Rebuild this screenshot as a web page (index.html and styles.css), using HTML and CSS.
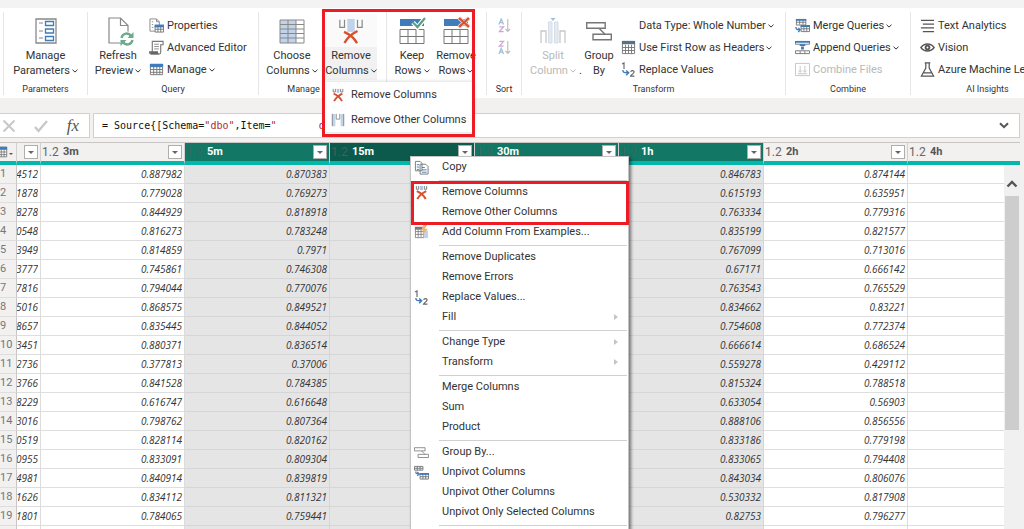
FILE: index.html
```html
<!DOCTYPE html>
<html lang="en">
<head>
  <meta charset="UTF-8" />
  <meta name="viewport" content="width=device-width, initial-scale=1.0" />
  <title>Power Query Editor</title>
  <link rel="stylesheet" href="styles.css">
</head>
<body>
  <!-- shared icons -->
  <svg class="defs" aria-hidden="true">
    <symbol id="i-chev" viewBox="0 0 6 4"><path d="M.5.7 3 3.1 5.5.7" fill="none" stroke="currentColor"/></symbol>
    <symbol id="i-table" viewBox="0 0 16 16">
      <path d="M1.5 2.5h13v11h-13zM1.5 8h13M1.5 11h13M5 5v8.500M8.300 5v8.500M11.500 5v8.500" fill="#fff" stroke="#777"/>
      <path d="M1 2h14v3.500H1z" fill="#3f7cb9"/>
    </symbol>
    <symbol id="i-remove" viewBox="0 0 26 28">
      <path d="M1 2v8h5V2M25 2v8h-5V2" fill="none" stroke="#888" stroke-width="1.300"/>
      <path d="M9 1h8v14H9z" fill="#c0d3ea"/>
      <path d="M5.500 15C10 17 16 21 19.500 27M20 14C14 17 9 21 6 27" fill="none" stroke="#d8512f" stroke-width="2.600"/>
    </symbol>
    <symbol id="i-remove-small" viewBox="0 0 16 16">
      <path d="M2.500 1v3.500H5V1M13.500 1v3.500H11V1" fill="none" stroke="#777"/>
      <path d="M6.500 1h3v4.500h-3z" fill="#a9c3e2"/>
      <path d="M3 6.500C6.500 8 10.500 11 12.500 15M13 6.500C9 8.500 5.500 11.500 3.500 15" fill="none" stroke="#d8512f" stroke-width="2.200"/>
    </symbol>
    <symbol id="i-replace" viewBox="0 0 16 16">
      <path d="M1.200 2.200 3.200 1v6.500M10.300 10.600c.3-2 3.800-1.800 3.600.2-.1 1.400-2.600 2.500-3.600 4.200h4" fill="none" stroke="#666" stroke-width="1.200"/>
      <path d="M2 8.500c0 3 1.500 3 5.500 3M5.500 9l2.700 2.500L5.500 14" fill="none" stroke="#3f7cb9" stroke-width="1.500"/>
    </symbol>
    <symbol id="i-group" viewBox="0 0 26 20">
      <path d="M.700 1.700h18.500v5.500H.700zM7 13.200h18.300v5.500H7zM13 7.200l6 6" fill="#fff" stroke="#777" stroke-width="1.400"/>
    </symbol>
  </svg>

  <header class="ribbon">
    <section class="group">
      <div class="tools center">
        <button class="big">
          <svg viewBox="0 0 26 26"><path d="M3 1h20v24H3z" fill="#fff" stroke="#888" stroke-width="1.300"/><path d="M6 5h4M6 13h4M6 20h4" stroke="#888"/><path d="M12.500 3.500h8v4h-8zM12.500 11h8v4h-8zM12.500 18.500h8v4h-8z" fill="#fff" stroke="#3f7cb9" stroke-width="1.300"/></svg>
          <span>Manage<br>Parameters<svg class="chev"><use href="#i-chev"/></svg></span>
        </button>
      </div>
      <h2>Parameters</h2>
    </section>

    <section class="group">
      <div class="tools query">
        <button class="big">
          <svg viewBox="0 0 26 26"><path d="M4 0h11.500L23 7.500V25H4zM15.500 0v7.500H23" fill="#fff" stroke="#888" stroke-width="1.200"/><circle cx="22" cy="21" r="7.500" fill="#fff"/><path d="M16.500 20c1-5 7-6 9.500-2M27.500 22c-1 5-7 6-9.500 2" fill="none" stroke="#6fa890" stroke-width="2.400"/><path d="M28.500 14v6h-6zM15.500 28v-6h6z" fill="#6fa890"/></svg>
          <span>Refresh<br>Preview<svg class="chev"><use href="#i-chev"/></svg></span>
        </button>
        <div class="stack">
          <button class="small"><svg viewBox="0 0 16 16"><path d="M1 1h7l3 3v10H1zM8 1v3h3M3 4h1.500M3 7h1.500M3 10h1.500" fill="#fff" stroke="#888"/><path d="M6.500 8.500h9v6.500h-9zM6.500 12h9M9.500 9v6M12.500 9v6" fill="#fff" stroke="#777"/><path d="M6 7h10v3H6z" fill="#3f7cb9"/></svg>Properties</button>
          <button class="small"><svg viewBox="0 0 16 16"><path d="M3.500 12V1.500H15V5h-2.500v8c0 1-1 2-2 2H2c-1 0-1.500-1-1.500-2.500h8.500c0 1.500.5 2.500 1.500 2.500" fill="#fff" stroke="#777" stroke-width="1.200"/><path d="M5.500 4.500h5M5.500 7h5M5.500 9.500h5" stroke="#888"/><path d="M.500 12.500H9L10 15H2z" fill="#666"/></svg>Advanced Editor</button>
          <button class="small"><svg><use href="#i-table"/></svg>Manage<svg class="chev"><use href="#i-chev"/></svg></button>
        </div>
      </div>
      <h2>Query</h2>
    </section>

    <section class="group">
      <div class="tools columns">
        <button class="big">
          <svg viewBox="0 0 26 26"><path d="M1 2h24v23H1z" fill="#fff"/><path d="M1 2h16v23H1z" fill="#c0d3ea"/><path d="M1 2h24v23H1zM1 6.500h24M1 11h24M1 15.500h24M1 20h24M9 2v23M17 2v23" fill="none" stroke="#888"/></svg>
          <span>Choose<br>Columns<svg class="chev"><use href="#i-chev"/></svg></span>
        </button>
        <button class="big open">
          <svg><use href="#i-remove"/></svg>
          <span>Remove<br>Columns<svg class="chev"><use href="#i-chev"/></svg></span>
        </button>
        <div class="dropdown">
          <button><svg><use href="#i-remove-small"/></svg>Remove Columns</button>
          <button><svg viewBox="0 0 16 16"><path d="M1 1h4v14H1zM11 1h4v14h-4z" fill="#c0d3ea"/><path d="M1.500 15V1M14.500 15V1M6 1v6h4V1" fill="none" stroke="#888"/></svg>Remove Other Columns</button>
        </div>
      </div>
      <h2>Manage Columns</h2>
    </section>

    <section class="group">
      <div class="tools rows">
        <button class="big narrow">
          <svg viewBox="0 0 26 26"><path d="M1 1h24v7H1z" fill="#3f7cb9"/><path d="M1 11.500h24v14H1zM1 18.500h24M9 11.500v14M17 11.500v14" fill="#fff" stroke="#777"/><path d="M14 4.500l4.500 5L26 0" fill="none" stroke="#fff" stroke-width="4.500"/><path d="M14 4.500l4.500 4.500L26 0" fill="none" stroke="#5f9f83" stroke-width="2.200"/></svg>
          <span>Keep<br>Rows<svg class="chev"><use href="#i-chev"/></svg></span>
        </button>
        <button class="big narrow">
          <svg viewBox="0 0 26 26"><path d="M1 1h24v7H1z" fill="#3f7cb9"/><path d="M1 11.500h24v14H1zM1 18.500h24M9 11.500v14M17 11.500v14" fill="#fff" stroke="#777"/><path d="M16 0l10 9M26 0l-10 9" fill="none" stroke="#e9c9c0" stroke-width="4"/><path d="M16 0l10 9M26 0l-10 9" fill="none" stroke="#d8512f" stroke-width="2.200"/></svg>
          <span>Remove<br>Rows<svg class="chev"><use href="#i-chev"/></svg></span>
        </button>
      </div>
      <h2></h2>
    </section>

    <section class="group">
      <div class="tools center">
        <div class="stack">
          <button class="small sort" disabled aria-label="Sort ascending"><svg viewBox="0 0 14 16"><path d="M1 7l2.500-6L6 7M2 5h3" fill="none" stroke="#9dbfe0" stroke-width="1.300"/><path d="M1.500 9.500H6l-4.500 5H6" fill="none" stroke="#c9a6d6" stroke-width="1.300"/><path d="M10.500 1v13M8 11.500l2.500 2.700 2.500-2.700" fill="none" stroke="#bbb" stroke-width="1.200"/></svg></button>
          <button class="small sort" disabled aria-label="Sort descending"><svg viewBox="0 0 14 16"><path d="M1.500 1.500H6l-4.500 5H6" fill="none" stroke="#c9a6d6" stroke-width="1.300"/><path d="M1 15l2.500-6L6 15M2 13h3" fill="none" stroke="#9dbfe0" stroke-width="1.300"/><path d="M10.500 1v13M8 11.500l2.500 2.700 2.500-2.700" fill="none" stroke="#bbb" stroke-width="1.200"/></svg></button>
        </div>
      </div>
      <h2>Sort</h2>
    </section>

    <section class="group">
      <div class="tools transform">
        <button class="big" disabled>
          <svg viewBox="0 0 26 26"><path d="M1 25V13h5v12M20 25V13h5v12" fill="none" stroke="#c8c8c8" stroke-width="1.300"/><path d="M8.500 4H12v21H8.500zM14.500 4H18v21h-3.500z" fill="#e3eaf2" stroke="#d5dde6"/><path d="M10.500 0h5L13 3z" fill="#9dbfe0"/></svg>
          <span>Split<br>Column<svg class="chev"><use href="#i-chev"/></svg></span>
        </button>
        <span class="dot">.</span>
        <button class="big by">
          <svg><use href="#i-group"/></svg>
          <span>Group<br>By</span>
        </button>
        <div class="stack">
          <button class="small text-only">Data Type: Whole Number<svg class="chev"><use href="#i-chev"/></svg></button>
          <button class="small"><svg viewBox="0 0 16 16"><path d="M1.500 1.500h13v13h-13zM1.500 8h13M1.500 11.200h13M4.800 5v9.500M8 5v9.500M11.200 5v9.500" fill="#fff" stroke="#777"/><path d="M1 1h14v3.500H1z" fill="#56718c"/></svg>Use First Row as Headers<svg class="chev"><use href="#i-chev"/></svg></button>
          <button class="small"><svg><use href="#i-replace"/></svg>Replace Values</button>
        </div>
      </div>
      <h2>Transform</h2>
    </section>

    <section class="group">
      <div class="tools side">
        <div class="stack">
          <button class="small"><svg viewBox="0 0 16 16"><path d="M1.500 1.500h10v6h-10zM1.500 4.500h10M5 2v5M8.500 2v5M6.500 8.500h9v6h-9zM6.500 11.500h9M9.500 9v5M12.500 9v5" fill="#fff" stroke="#777"/><path d="M1 1h11v2H1zM6 7.500h10v2H6z" fill="#3f7cb9"/><path d="M1 9.500c0 3 1.500 3 4 3M3.500 10.500l2 2-2 2.500" fill="none" stroke="#3f7cb9" stroke-width="1.400"/></svg>Merge Queries<svg class="chev"><use href="#i-chev"/></svg></button>
          <button class="small"><svg viewBox="0 0 16 16"><path d="M.500 1.500h15v3H.500zM.500 11.500h15v3H.500zM5.500 12v2.500M10.500 12v2.500" fill="#fff" stroke="#777"/><path d="M0 1h16v2H0zM5 4.500h6v2H5zM6.500 7h3v3h-3z" fill="#3f7cb9"/></svg>Append Queries<svg class="chev"><use href="#i-chev"/></svg></button>
          <button class="small" disabled><svg viewBox="0 0 16 16"><path d="M.500 1.500h15v13H.500zM5.500 4v7M3.500 9l2 2 2-2M10.500 4v7M8.500 9l2 2 2-2M3 12.500h10" fill="none" stroke="#c4c4c4"/></svg>Combine Files</button>
        </div>
      </div>
      <h2>Combine</h2>
    </section>

    <section class="group">
      <div class="tools side">
        <div class="stack">
          <button class="small"><svg viewBox="0 0 16 16"><path d="M1 2.500h14M3 6.500h12M1 10.500h14M3 14.500h12" stroke="#555" stroke-width="1.200"/></svg>Text Analytics</button>
          <button class="small"><svg viewBox="0 0 16 16"><path d="M1 8c3.500-5 10.500-5 14 0-3.500 5-10.500 5-14 0z" fill="#fff" stroke="#555" stroke-width="1.500"/><circle cx="8" cy="8" r="3" fill="#555"/><circle cx="8" cy="8" r="1" fill="#fff"/></svg>Vision</button>
          <button class="small"><svg viewBox="0 0 16 16"><path d="M5 1h6M6.200 1v5.500L1.500 15h13L9.800 6.500V1M4 11.500h8" fill="none" stroke="#555" stroke-width="1.300"/></svg>Azure Machine Learning</button>
        </div>
      </div>
      <h2>AI Insights</h2>
    </section>

    <div class="mark mark-ribbon"></div>
  </header>

  <div class="formula-bar">
    <div class="formula-actions">
      <button aria-label="Cancel"><svg viewBox="0 0 14 14"><path d="M1.500 1.500l11 11M12.500 1.500l-11 11" stroke="#c8c8c8" stroke-width="2"/></svg></button>
      <button aria-label="Apply"><svg viewBox="0 0 14 14"><path d="M1 8l3.500 4L13 2" fill="none" stroke="#c8c8c8" stroke-width="2.400"/></svg></button>
      <button class="fx" aria-label="Insert step">fx</button>
    </div>
    <div class="formula" role="textbox" aria-label="Formula" contenteditable="true" spellcheck="false">= Source{[Schema=<b>"dbo"</b>,Item=<b>"       d</b></div>
    <button class="expand" aria-label="Expand formula"><svg viewBox="0 0 10 7"><path d="M1 1.200l4 4 4-4" fill="none" stroke="#555" stroke-width="2"/></svg></button>
  </div>

  <main class="grid">
    <table>
      <colgroup>
        <col class="c-num"><col class="c-cut"><col class="c-a"><col class="c-b"><col class="c-b"><col class="c-a"><col class="c-b"><col class="c-a"><col>
      </colgroup>
      <thead>
        <tr>
          <th><div class="head corner"><svg viewBox="0 0 16 16"><use href="#i-table"/></svg><i></i></div></th>
          <th><div class="head"><button class="filter" aria-label="Filter"></button></div></th>
          <th><div class="head"><em>1.2</em>3m<button class="filter" aria-label="Filter 3m"></button></div></th>
          <th class="sel"><div class="head"><em>1.2</em>5m<button class="filter" aria-label="Filter 5m"></button></div></th>
          <th class="sel active"><div class="head"><em>1.2</em>15m<button class="filter" aria-label="Filter 15m"></button></div></th>
          <th class="sel"><div class="head"><em>1.2</em>30m<button class="filter" aria-label="Filter 30m"></button></div></th>
          <th class="sel"><div class="head"><em>1.2</em>1h<button class="filter" aria-label="Filter 1h"></button></div></th>
          <th><div class="head"><em>1.2</em>2h<button class="filter" aria-label="Filter 2h"></button></div></th>
          <th><div class="head"><em>1.2</em>4h</div></th>
        </tr>
      </thead>
      <tbody id="rows"></tbody>
    </table>
    <div class="scrollbar">
      <svg viewBox="0 0 12 8"><path d="M1.500 6.500L6 2l4.500 4.500" fill="none" stroke="#555" stroke-width="2.400"/></svg>
      <div class="thumb"></div>
    </div>
  </main>

  <div class="context-menu">
    <ul>
      <li><button><svg viewBox="0 0 16 16"><path d="M1.500 1.500h5l2 2v8h-7zM6.500 4.500h6l2.500 2.500v8H6.500z" fill="#fff" stroke="#777"/><path d="M3 5h2.500M3 7.500h2.500M3 10h2.500M8.500 8h3M8.500 10.500h5M8.500 13h5" stroke="#3f7cb9"/></svg>Copy</button></li>
      <li class="line" role="separator"></li>
      <li><button><svg><use href="#i-remove-small"/></svg>Remove Columns</button></li>
      <li><button>Remove Other Columns</button></li>
      <li><button><svg viewBox="0 0 16 16"><path d="M1.500 2.500h9v11h-9zM1.500 7h9M1.500 10h9M4.500 5v8M7.500 5v8" fill="#fff" stroke="#888"/><path d="M1 2h8v3H1z" fill="#777"/><path d="M10.500 6H15v8h-4.500z" fill="#c0d3ea"/><path d="M10 0h4l-2.500 4H15l-6.500 7 2-5.500H8z" fill="#efb469"/></svg>Add Column From Examples...</button></li>
      <li class="line" role="separator"></li>
      <li><button>Remove Duplicates</button></li>
      <li><button>Remove Errors</button></li>
      <li><button><svg><use href="#i-replace"/></svg>Replace Values...</button></li>
      <li><button class="sub">Fill</button></li>
      <li class="line" role="separator"></li>
      <li><button class="sub">Change Type</button></li>
      <li><button class="sub">Transform</button></li>
      <li class="line" role="separator"></li>
      <li><button>Merge Columns</button></li>
      <li><button>Sum</button></li>
      <li><button>Product</button></li>
      <li class="line" role="separator"></li>
      <li><button><svg><use href="#i-group"/></svg>Group By...</button></li>
      <li><button><svg viewBox="0 0 16 16"><path d="M.500 1.500h9v4h-9zM.500 3.500h9M3.500 1.500v4M6.500 1.500v4M6.500 9.500h9v5.500h-9zM6.500 12.500h9M9.500 10v5M12.500 10v5" fill="#fff" stroke="#777"/><path d="M6 8.500h10v2H6z" fill="#3f7cb9"/><path d="M2 7c0 2.500 0 2.500 3.500 2.500M3.500 7.500l2 2-2 2" fill="none" stroke="#3f7cb9" stroke-width="1.300"/></svg>Unpivot Columns</button></li>
      <li><button>Unpivot Other Columns</button></li>
      <li><button>Unpivot Only Selected Columns</button></li>
      <li class="line" role="separator"></li>
    </ul>
    <div class="mark mark-menu"></div>
  </div>

  <script src="grid.js"></script>
</body>
</html>
```
FILE: styles.css
```css
* {
  box-sizing: border-box;
}
body {
  margin: 0;
  height: 100vh;
  overflow: hidden;
  position: relative;
  display: flex;
  flex-direction: column;
  background: #f2f1f0;
  color: #333;
  font-family: Roboto, "Open Sans", sans-serif;
  font-size: 11px;
}
button {
  margin: 0;
  padding: 0;
  border: 0;
  background: none;
  color: inherit;
  font: inherit;
}
button:disabled {
  color: #b8b8b8;
}
h2 {
  margin: 0;
  font-size: 9px;
  font-weight: normal;
  line-height: 14px;
  height: 13px;
  text-align: center;
  white-space: nowrap;
}
.defs {
  position: absolute;
  width: 0;
  height: 0;
}
.chev {
  width: 6px;
  height: 4px;
  margin-left: 2px;
  vertical-align: middle;
}

/* Ribbon */
.ribbon {
  position: relative;
  display: grid;
  grid-template-columns: 84px 171px 128px 100px 35px 264px 125px 154px;
  padding: 4px 0 3px 3px;
  border-top: 8px solid #f3f3f3;
  box-sizing: content-box;
  background: #fff;
}
.group {
  border-left: 1px solid #e6e6e6;
  min-width: 0;
}
.tools {
  display: flex;
  height: 70px;
  padding-top: 2px;
}
.center {
  justify-content: center;
}
.query {
  padding-left: 4px;
  gap: 5px;
}
.columns {
  position: relative;
  padding-left: 7px;
  gap: 7px;
}
.rows {
  padding-left: 3px;
}
.transform {
  padding-left: 5px;
}
.side {
  padding-left: 9px;
}
.big {
  display: flex;
  flex-direction: column;
  align-items: center;
  gap: 4px;
  width: 52px;
  height: 66px;
  padding-top: 4px;
  line-height: 15px;
  white-space: nowrap;
}
.big > svg {
  width: 26px;
  height: 26px;
  flex: none;
  overflow: visible;
}
.narrow {
  width: 44px;
}
.by {
  width: 32px;
  margin-right: 6px;
}
.open {
  background: linear-gradient(#fafafa 33px, #f1f1f1 33px);
}
.dot {
  width: 4px;
  padding-top: 49px;
  line-height: 15px;
}
.stack {
  display: flex;
  flex-direction: column;
  align-items: flex-start;
}
.small {
  display: flex;
  align-items: center;
  height: 22px;
  white-space: nowrap;
}
.small > svg:first-child {
  width: 15px;
  height: 15px;
  margin-right: 3px;
}
.small > .chev:last-child {
  width: 6px;
  height: 4px;
  margin: 2px 0 0 2px;
}
.small.text-only {
  padding-left: 18px;
}
.small.sort > svg {
  margin: 0;
}
.dropdown {
  position: absolute;
  left: 66px;
  top: 70px;
  z-index: 2;
  width: 148px;
  background: #fff;
  box-shadow: 0 0 4px rgba(0, 0, 0, 0.2);
}
.dropdown button {
  display: flex;
  align-items: center;
  gap: 6px;
  width: 100%;
  height: 25px;
  padding-left: 6px;
  white-space: nowrap;
}
.dropdown svg {
  flex: none;
  width: 14px;
  height: 14px;
}
.mark {
  position: absolute;
  border: 3px solid #ed1c24;
  pointer-events: none;
  z-index: 3;
}
.mark-ribbon {
  left: 322px;
  top: 1px;
  width: 153px;
  height: 128px;
}

/* Formula bar */
.formula-bar {
  display: flex;
  height: 25px;
  margin: 15px 4px 4px 0;
}
.formula-actions {
  display: flex;
  align-items: center;
  justify-content: space-between;
  width: 90px;
  padding: 0 10px 0 2px;
  margin-right: 3px;
  background: #fff;
  border: 1px solid #d2d0ce;
  border-left: 0;
}
.formula-actions svg {
  display: block;
  width: 14px;
  height: 14px;
}
.fx {
  font: italic 17px "Liberation Serif", serif;
  color: #555;
}
.formula {
  flex: 1;
  padding-left: 8px;
  border: 1px solid #d2d0ce;
  border-right: 0;
  background: #fff;
  color: #111;
  font: 10px/23px "DejaVu Sans Mono", monospace;
  white-space: pre;
}
.formula b {
  color: #b3282d;
  font-weight: normal;
}
.expand {
  width: 21px;
  background: #fff;
  border: 1px solid #d2d0ce;
  border-left: 0;
}
.expand svg {
  display: block;
  width: 10px;
  height: 7px;
}

/* Data grid */
.grid {
  position: relative;
  flex: 1;
  min-height: 0;
  overflow: hidden;
  margin-right: 4px;
  background: #fff;
}
table {
  width: 100%;
  table-layout: fixed;
  border-collapse: separate;
  border-spacing: 0;
}
.c-num {
  width: 17px;
}
.c-cut {
  width: 24px;
}
.c-a {
  width: 144px;
}
.c-b {
  width: 145px;
}
th {
  height: 23px;
  padding: 0;
  border-top: 1px solid #c8c6c4;
  border-right: 1px solid #d2d0ce;
  border-bottom: 4px solid #01b8aa;
  background: #f2f1f0;
  color: #555;
  font-size: 11px;
  font-weight: bold;
  line-height: 18px;
}
th:last-child {
  border-right: 0;
}
.head {
  display: flex;
  align-items: center;
  height: 18px;
  padding: 0 2px 0 1px;
}
.head em {
  flex: none;
  width: 21px;
  color: #666;
  font-size: 12px;
  font-style: normal;
  font-weight: normal;
  text-align: left;
}
.filter {
  display: flex;
  align-items: center;
  justify-content: center;
  width: 14px;
  height: 14px;
  margin-left: auto;
  border: 1px solid #b0aeac;
  background: #fff;
}
.filter::after {
  content: "";
  border: 3px solid transparent;
  border-top-color: #666;
  border-bottom: 0;
}
.sel {
  background: #127865;
  color: #fff;
}
.sel em {
  color: #46605a;
}
.active {
  background: #0b5a4c;
}
.corner {
  padding: 0;
  overflow: hidden;
}
.corner svg {
  width: 14px;
  height: 14px;
  margin-left: -6px;
  flex: none;
}
.corner i {
  margin: 4px 0 0 1px;
  border: 2px solid transparent;
  border-top-color: #555;
  border-bottom: 0;
}
td {
  height: 19px;
  padding: 0 2px;
  border-right: 1px solid #dcdcdc;
  border-bottom: 1px solid #dedede;
  font-family: "Open Sans", sans-serif;
  font-size: 10px;
  line-height: 18px;
  font-style: italic;
  text-align: right;
}
td.num {
  padding: 0;
  background: #f2f1f0;
  color: #777;
  font-size: 11px;
  font-family: Roboto, sans-serif;
  font-style: normal;
  text-align: left;
  border-right-color: #c8c6c4;
}
.cut {
  display: flex;
  justify-content: flex-end;
  overflow: hidden;
}
td.cut-cell {
  padding-left: 0;
}
td.picked {
  background: #e5e5e5;
  border-color: #d6d6d6;
}
.scrollbar {
  position: absolute;
  top: 23px;
  right: 0;
  bottom: 0;
  width: 16px;
  padding-top: 15px;
  background: #f0f0f0;
}
.scrollbar svg {
  display: block;
  width: 12px;
  height: 8px;
  margin: 0 auto;
}
.thumb {
  height: 67%;
  margin: 8px 1px 0;
  background: #cdcdcd;
}

/* Context menu */
.context-menu {
  position: absolute;
  left: 410px;
  top: 156px;
  z-index: 4;
  width: 219px;
  padding-bottom: 8px;
  border: 1px solid #c4c4c4;
  background: #fff;
  box-shadow: 2px 2px 3px rgba(0, 0, 0, 0.5);
}
.context-menu ul {
  margin: 0;
  padding: 0;
  list-style: none;
}
.context-menu li button {
  position: relative;
  display: block;
  width: 100%;
  height: 20px;
  padding-left: 31px;
  line-height: 20px;
  text-align: left;
  white-space: nowrap;
}
.context-menu svg {
  position: absolute;
  left: 3px;
  top: 3px;
  width: 15px;
  height: 15px;
}
.context-menu .line {
  height: 1px;
  margin: 3px 1px 1px 28px;
  background: #d0d0d0;
}
.sub::after {
  content: "";
  position: absolute;
  right: 10px;
  top: 7px;
  border: 3px solid transparent;
  border-left: 4px solid #c4c4c4;
  border-right: 0;
}
.mark-menu {
  left: 0;
  right: -1px;
  top: 24px;
  height: 44px;
}
```
FILE: grid.js
```js
// cut column, 3m, 5m, 1h, 2h
const data = [
  ["4512", "0.887982", "0.870383", "0.846783", "0.874144"],
  ["1878", "0.779028", "0.769273", "0.615193", "0.635951"],
  ["8278", "0.844929", "0.818918", "0.763334", "0.779316"],
  ["0548", "0.816273", "0.783248", "0.835199", "0.821577"],
  ["3949", "0.814859", "0.7971", "0.767099", "0.713016"],
  ["3777", "0.745861", "0.746308", "0.67171", "0.666142"],
  ["7816", "0.794044", "0.770076", "0.763543", "0.765529"],
  ["5016", "0.868575", "0.849521", "0.834662", "0.83221"],
  ["8657", "0.835445", "0.844052", "0.754608", "0.772374"],
  ["3451", "0.880371", "0.836514", "0.666614", "0.686524"],
  ["2736", "0.377813", "0.37006", "0.559278", "0.429112"],
  ["3766", "0.841528", "0.784385", "0.815324", "0.788518"],
  ["8229", "0.616747", "0.616648", "0.633054", "0.56903"],
  ["3016", "0.798762", "0.807364", "0.888106", "0.856556"],
  ["0519", "0.828114", "0.820162", "0.833186", "0.779198"],
  ["0955", "0.833091", "0.809304", "0.833065", "0.794408"],
  ["4981", "0.840914", "0.839819", "0.843034", "0.806076"],
  ["1626", "0.834112", "0.811321", "0.530332", "0.817908"],
  ["1801", "0.784065", "0.759441", "0.82753", "0.796277"],
  ["", "", "", "", ""]
];

document.getElementById("rows").innerHTML = data.map((r, i) => `
  <tr>
    <td class="num">${r[0] ? i + 1 : ""}</td>
    <td class="cut-cell"><div class="cut">${r[0]}</div></td>
    <td>${r[1]}</td>
    <td class="picked">${r[2]}</td>
    <td class="picked"></td>
    <td class="picked"></td>
    <td class="picked">${r[3]}</td>
    <td>${r[4]}</td>
    <td></td>
  </tr>`).join("");
```
